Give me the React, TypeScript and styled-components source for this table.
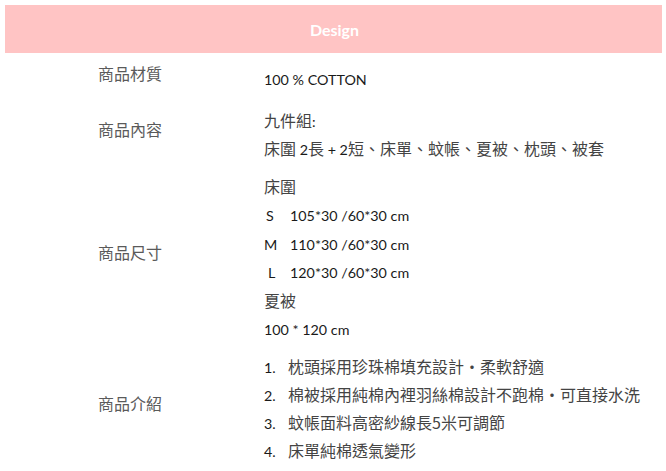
import React from 'react';
import styled, { createGlobalStyle } from 'styled-components';

const GlobalStyle = createGlobalStyle`
    html, body {
        margin: 0;
        padding: 0;
        background: #fff;
    }
    body {
        font-family: Lato, "Noto Sans CJK TC", sans-serif;
        color: #222;
    }
`;

const Page = styled.div`
    width: 666px;
    padding: 5px 4px 0 5px;
    box-sizing: border-box;
`;

const Banner = styled.div`
    height: 48px;
    background-color: #ffc4c4;
    display: flex;
    justify-content: center;
    align-items: center;
    color: #fff;
    font-weight: 700;
    font-size: 16px;
    padding-left: 2px;
`;

const Table = styled.div`
    padding-top: 11px;
`;

const Row = styled.div<{ space: number }>`
    display: grid;
    grid-template-columns: 252px 1fr;
    align-items: center;
    padding-bottom: ${props => props.space}px;
`;

const Label = styled.div`
    text-align: center;
    font-family: "Noto Sans CJK TC", sans-serif;
    font-size: 16px;
    line-height: 20px;
    color: #5a5a5a;
    margin-top: -10px;
    padding-right: 2px;
`;

const Value = styled.div`
    padding-left: 7px;
    font-size: 14.3px;
    color: #1a1a1a;
`;

const Line = styled.div<{ latin?: boolean }>`
    line-height: 28.5px;
    height: 28.5px;
    box-sizing: border-box;
    padding-top: ${props => (props.latin ? 2 : 0)}px;
    white-space: nowrap;
`;

const Cjk = styled.span`
    font-family: "Noto Sans CJK TC", sans-serif;
    font-size: 16px;
    color: #444;
`;

const SizeLetter = styled.span<{ indent: number }>`
    display: inline-block;
    width: ${props => 26 - props.indent}px;
    padding-left: ${props => props.indent}px;
`;

const ListItem = styled.div`
    display: grid;
    grid-template-columns: 24px 1fr;
    align-items: baseline;
    line-height: 28.2px;
    height: 28.2px;
    white-space: nowrap;
`;

const sizes = [
    { letter: 'S', indent: 2, value: '105*30 /60*30 cm' },
    { letter: 'M', indent: 0, value: '110*30 /60*30 cm' },
    { letter: 'L', indent: 4, value: '120*30 /60*30 cm' },
];

const features = [
    '枕頭採用珍珠棉填充設計・柔軟舒適',
    '棉被採用純棉內裡羽絲棉設計不跑棉・可直接水洗',
    '蚊帳面料高密紗線長5米可調節',
    '床單純棉透氣變形',
];

const App = () => {
    return (
        <Page lang="zh-TW">
            <GlobalStyle />
            <Banner>Design</Banner>
            <Table>
                <Row space={13}>
                    <Label>商品材質</Label>
                    <Value>
                        <Line latin>100 % COTTON</Line>
                    </Value>
                </Row>
                <Row space={9}>
                    <Label>商品內容</Label>
                    <Value>
                        <Line><Cjk>九件組</Cjk>:</Line>
                        <Line>
                            <Cjk>床圍</Cjk> 2<Cjk>長</Cjk> + 2<Cjk>短、床單、蚊帳、夏被、枕頭、被套</Cjk>
                        </Line>
                    </Value>
                </Row>
                <Row space={9}>
                    <Label>商品尺寸</Label>
                    <Value>
                        <Line><Cjk>床圍</Cjk></Line>
                        {sizes.map(size => (
                            <Line latin key={size.letter}>
                                <SizeLetter indent={size.indent}>{size.letter}</SizeLetter>
                                {size.value}
                            </Line>
                        ))}
                        <Line><Cjk>夏被</Cjk></Line>
                        <Line latin>100 * 120 cm</Line>
                    </Value>
                </Row>
                <Row space={0}>
                    <Label>商品介紹</Label>
                    <Value>
                        {features.map((text, index) => (
                            <ListItem key={index}>
                                <span>{index + 1}.</span>
                                <Cjk>{text}</Cjk>
                            </ListItem>
                        ))}
                    </Value>
                </Row>
            </Table>
        </Page>
    );
};

export default App;
